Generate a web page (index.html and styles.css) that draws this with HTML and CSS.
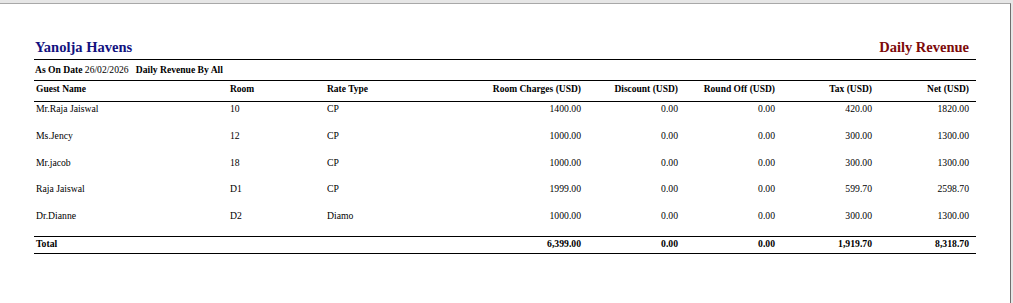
FILE: index.html
```html
<!DOCTYPE html>
<html>
<head>
<meta charset="utf-8">
<link rel="stylesheet" href="styles.css">
</head>
<body>
<div class="viewer">
  <div class="page">
    <div class="title-row">
      <div class="hotel">Yanolja Havens</div>
      <div class="report">Daily Revenue</div>
    </div>
    <div class="sub-row"><b>As On Date</b> 26/02/2026 &nbsp; <b>Daily Revenue By All</b></div>
    <table class="grid">
      <colgroup>
        <col class="c-guest"><col class="c-room"><col class="c-rate"><col class="c-charge">
        <col class="c-num"><col class="c-num"><col class="c-num"><col class="c-num">
      </colgroup>
      <thead>
        <tr>
          <th>Guest Name</th><th>Room</th><th>Rate Type</th>
          <th class="num">Room Charges (USD)</th><th class="num">Discount (USD)</th>
          <th class="num">Round Off (USD)</th><th class="num">Tax (USD)</th><th class="num">Net (USD)</th>
        </tr>
      </thead>
      <tbody>
        <tr><td>Mr.Raja Jaiswal</td><td>10</td><td>CP</td><td class="num">1400.00</td><td class="num">0.00</td><td class="num">0.00</td><td class="num">420.00</td><td class="num">1820.00</td></tr>
        <tr><td>Ms.Jency</td><td>12</td><td>CP</td><td class="num">1000.00</td><td class="num">0.00</td><td class="num">0.00</td><td class="num">300.00</td><td class="num">1300.00</td></tr>
        <tr><td>Mr.jacob</td><td>18</td><td>CP</td><td class="num">1000.00</td><td class="num">0.00</td><td class="num">0.00</td><td class="num">300.00</td><td class="num">1300.00</td></tr>
        <tr><td>Raja Jaiswal</td><td>D1</td><td>CP</td><td class="num">1999.00</td><td class="num">0.00</td><td class="num">0.00</td><td class="num">599.70</td><td class="num">2598.70</td></tr>
        <tr><td>Dr.Dianne</td><td>D2</td><td>Diamo</td><td class="num">1000.00</td><td class="num">0.00</td><td class="num">0.00</td><td class="num">300.00</td><td class="num">1300.00</td></tr>
      </tbody>
      <tfoot>
        <tr><td>Total</td><td></td><td></td><td class="num">6,399.00</td><td class="num">0.00</td><td class="num">0.00</td><td class="num">1,919.70</td><td class="num">8,318.70</td></tr>
      </tfoot>
    </table>
  </div>
</div>
</body>
</html>
```

FILE: styles.css
```css
html, body {
  margin: 0;
  padding: 0;
}
body {
  background: #e6e6e6;
  font-family: "Liberation Serif", "Times New Roman", serif;
  color: #000;
  overflow: hidden;
}
.viewer {
  padding-top: 3px;
  padding-right: 2px;
}
.page {
  box-sizing: border-box;
  background: #fff;
  border-top: 1px solid #a8a8a8;
  border-right: 1px solid #6e6e6e;
  height: 300px;
  padding: 34px 34px 0 34px;
}
.title-row {
  display: flex;
  justify-content: space-between;
  align-items: baseline;
  font-weight: bold;
  font-size: 14.5px;
  line-height: 18px;
  padding: 0 7px 3px 1px;
  border-bottom: 1px solid #000;
}
.hotel { color: #12127f; }
.report { color: #7d0a0a; }
.sub-row {
  font-size: 9.6px;
  line-height: 20px;
  padding-left: 1px;
  border-bottom: 1px solid #000;
}
.grid {
  width: 942px;
  table-layout: fixed;
  border-collapse: collapse;
  font-size: 9.7px;
}
.c-guest { width: 194px; }
.c-room { width: 97px; }
.c-rate { width: 165px; }
.c-charge { width: 98px; }
.c-num { width: 97px; }
.grid th {
  font-weight: bold;
  font-size: 9.5px;
  text-align: left;
  line-height: 16px;
  padding: 0 7px 4px 2px;
  border-bottom: 1px solid #000;
  white-space: nowrap;
}
.grid td {
  line-height: 14px;
  padding: 0 7px 12.8px 2px;
  vertical-align: top;
  white-space: nowrap;
}
.grid .num { text-align: right; }
.grid tfoot td {
  font-weight: bold;
  padding-bottom: 2px;
  border-top: 1px solid #000;
  border-bottom: 1px solid #000;
}
```
